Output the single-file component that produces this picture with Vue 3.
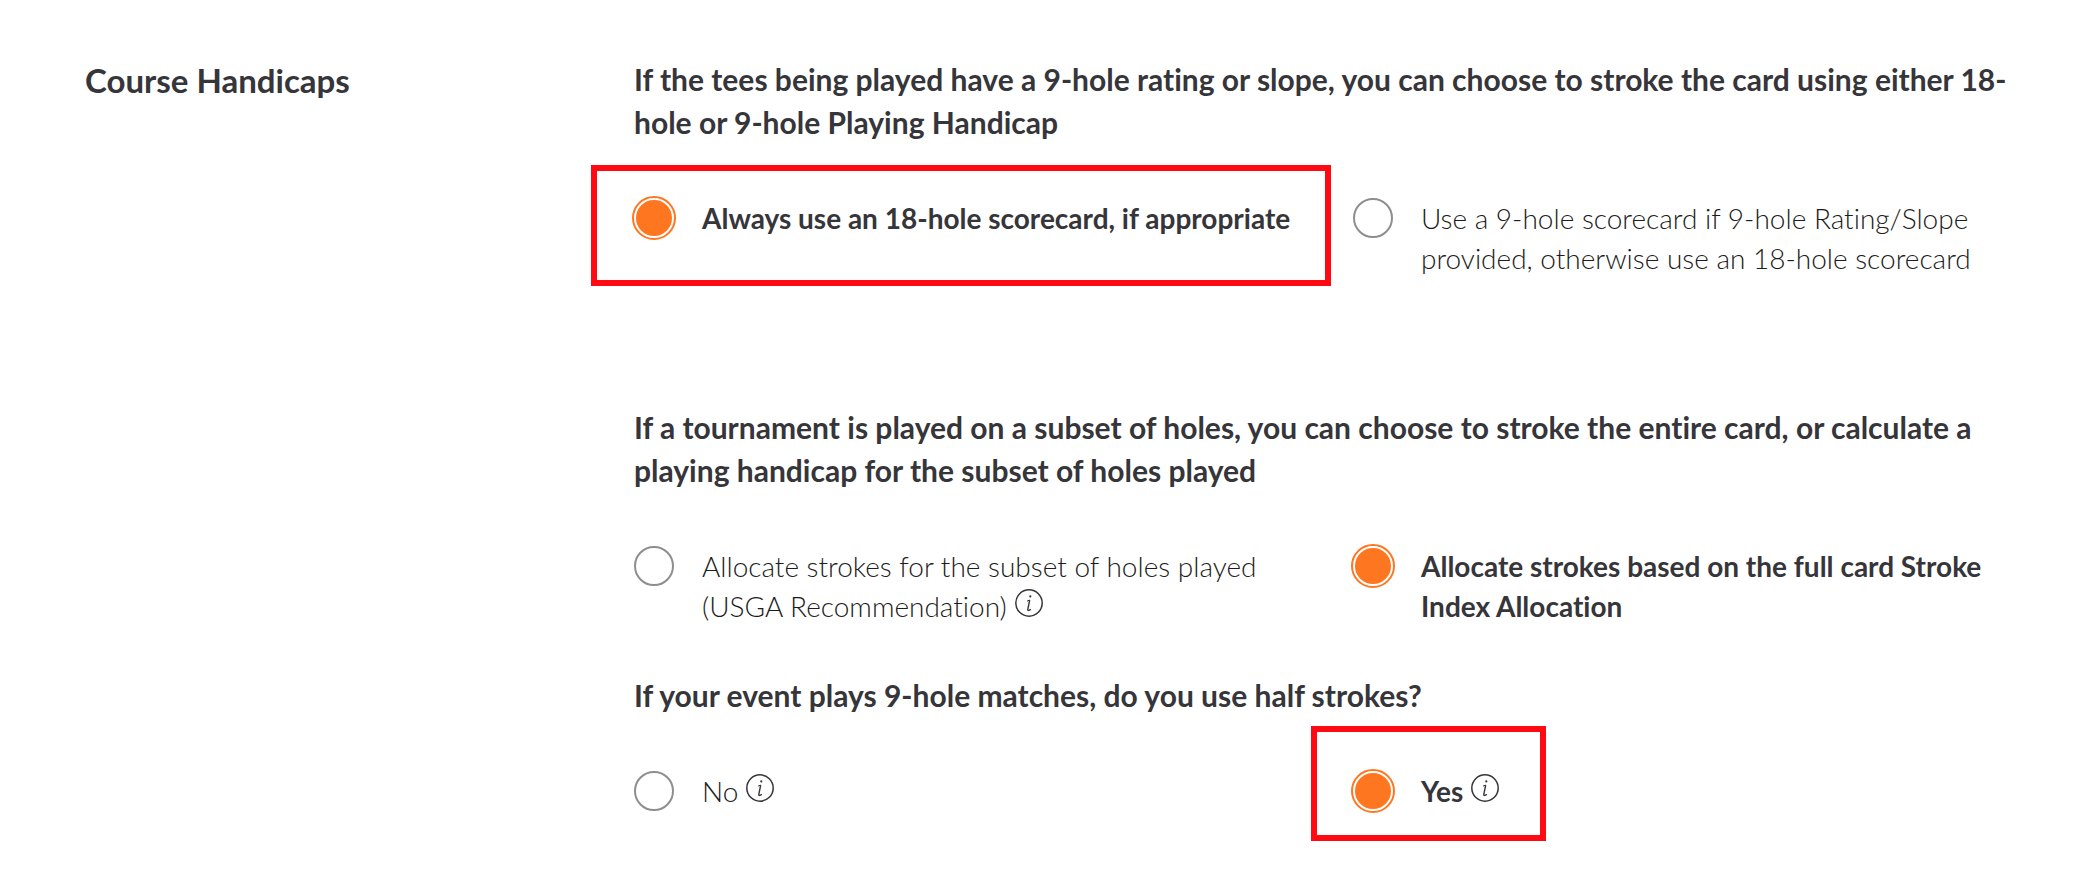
<script setup>
import { ref } from 'vue'

const questions = ref([
  {
    id: 'nine-hole-rating',
    size: 'tall',
    title:
      'If the tees being played have a 9-hole rating or slope, you can choose to stroke the card using either 18-hole or 9-hole Playing Handicap',
    selected: 'full',
    options: [
      { value: 'full', label: 'Always use an 18-hole scorecard, if appropriate', mark: 'mark-card' },
      {
        value: 'nine',
        label: 'Use a 9-hole scorecard if 9-hole Rating/Slope provided, otherwise use an 18-hole scorecard',
      },
    ],
  },
  {
    id: 'subset',
    size: 'regular',
    title:
      'If a tournament is played on a subset of holes, you can choose to stroke the entire card, or calculate a playing handicap for the subset of holes played',
    selected: 'index',
    options: [
      {
        value: 'usga',
        label: 'Allocate strokes for the subset of holes played (USGA Recommendation)',
        info: true,
      },
      { value: 'index', label: 'Allocate strokes based on the full card Stroke Index Allocation' },
    ],
  },
  {
    id: 'half-strokes',
    size: 'compact',
    title: 'If your event plays 9-hole matches, do you use half strokes?',
    selected: 'yes',
    options: [
      { value: 'no', label: 'No', info: true },
      { value: 'yes', label: 'Yes', info: true, mark: 'mark-yes' },
    ],
  },
])
</script>

<template>
  <main class="settings">
    <h2 class="section-title">Course Handicaps</h2>
    <div class="questions">
      <fieldset v-for="q in questions" :key="q.id" class="question" :class="q.size">
        <legend class="question-title">{{ q.title }}</legend>
        <div class="options">
          <div v-for="o in q.options" :key="o.value" class="option">
            <input
              :id="`${q.id}-${o.value}`"
              v-model="q.selected"
              class="radio"
              type="radio"
              :name="q.id"
              :value="o.value"
            />
            <div class="option-text">
              <label :for="`${q.id}-${o.value}`" :class="{ chosen: q.selected === o.value }">{{ o.label }}</label>
              <button v-if="o.info" class="info" type="button" aria-label="More information">
                <svg viewBox="0 0 28 28" width="28" height="28" fill="none" stroke="currentColor" aria-hidden="true">
                  <circle cx="14" cy="14" r="13.2" stroke-width="1.5" />
                  <circle cx="15.3" cy="7.4" r="1.1" fill="currentColor" stroke="none" />
                  <path d="M12 12.1 L14.7 11.1" stroke-width="1" />
                  <path d="M14.7 11.1 L12.9 19.8 Q12.6 21.6 13.6 21.4 Q14.6 21.2 15.8 20.2" stroke-width="1.4" />
                </svg>
              </button>
            </div>
            <span v-if="o.mark" class="mark" :class="o.mark" aria-hidden="true"></span>
          </div>
        </div>
      </fieldset>
    </div>
  </main>
</template>

<style>
body {
  margin: 0;
  background: #fff;
}
</style>

<style scoped>
.settings {
  display: grid;
  grid-template-columns: 549px minmax(0, 1fr);
  padding: 58px 24px 44px 85px;
  font-family: Lato, "Open Sans", sans-serif;
  font-variant-ligatures: none;
  color: #35353a;
}
.section-title {
  margin: 0;
  font-size: 33px;
  line-height: 45px;
  font-weight: 700;
}
.question {
  min-width: 0;
  margin: 0;
  padding: 0;
  border: 0;
}
.question-title {
  padding: 0 48px 0 0;
  font-size: 30px;
  line-height: 43px;
  font-weight: 700;
}
.options {
  display: grid;
  grid-template-columns: repeat(2, minmax(0, 1fr));
  font-size: 28px;
  line-height: 40px;
}
.tall .options {
  padding: 54px 0 128px;
}
.regular .options {
  padding: 54px 0 48px;
}
.compact .options {
  padding-top: 54px;
}
.option {
  position: relative;
  display: flex;
  gap: 28px;
  width: fit-content;
}
.option-text {
  padding-right: 24px;
  font-weight: 300;
  color: #1c1c20;
}
.option-text .chosen {
  font-weight: 700;
  color: #35353a;
}
.radio {
  appearance: none;
  flex: none;
  width: 40px;
  height: 40px;
  margin: 0;
  border: 2px solid #8e8e8e;
  border-radius: 50%;
  background: #fff;
}
.radio:checked {
  border-color: #fff;
  background: #ff7620;
  outline: 2px solid #ff7620;
}
.info {
  display: inline-block;
  width: 28px;
  height: 28px;
  margin-left: 8px;
  padding: 0;
  border: 0;
  background: none;
  color: #35353a;
  vertical-align: 0;
  line-height: 0;
}
.mark {
  position: absolute;
  border: 6px solid #ff0a12;
  pointer-events: none;
}
.mark-card {
  inset: -33px -17px -8px -43px;
}
.mark-yes {
  inset: -45px -23px -30px -42px;
}
</style>
